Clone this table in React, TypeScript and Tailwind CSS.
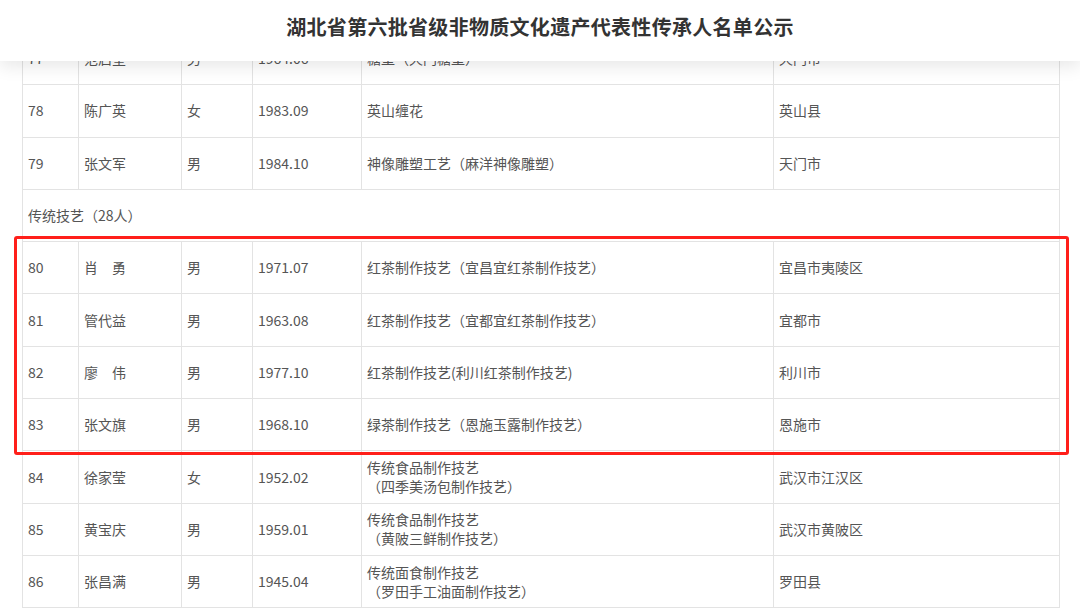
type Row = {
  no: string;
  name: string;
  sex: string;
  born: string;
  item: string[];
  place: string;
};

const before: Row[] = [
  { no: '77', name: '范启望', sex: '男', born: '1964.06', item: ['糖塑（天门糖塑）'], place: '天门市' },
  { no: '78', name: '陈广英', sex: '女', born: '1983.09', item: ['英山缠花'], place: '英山县' },
  { no: '79', name: '张文军', sex: '男', born: '1984.10', item: ['神像雕塑工艺（麻洋神像雕塑）'], place: '天门市' },
];

const after: Row[] = [
  { no: '80', name: '肖　勇', sex: '男', born: '1971.07', item: ['红茶制作技艺（宜昌宜红茶制作技艺）'], place: '宜昌市夷陵区' },
  { no: '81', name: '管代益', sex: '男', born: '1963.08', item: ['红茶制作技艺（宜都宜红茶制作技艺）'], place: '宜都市' },
  { no: '82', name: '廖　伟', sex: '男', born: '1977.10', item: ['红茶制作技艺(利川红茶制作技艺)'], place: '利川市' },
  { no: '83', name: '张文旗', sex: '男', born: '1968.10', item: ['绿茶制作技艺（恩施玉露制作技艺）'], place: '恩施市' },
  { no: '84', name: '徐家莹', sex: '女', born: '1952.02', item: ['传统食品制作技艺', '（四季美汤包制作技艺）'], place: '武汉市江汉区' },
  { no: '85', name: '黄宝庆', sex: '男', born: '1959.01', item: ['传统食品制作技艺', '（黄陂三鲜制作技艺）'], place: '武汉市黄陂区' },
  { no: '86', name: '张昌满', sex: '男', born: '1945.04', item: ['传统面食制作技艺', '（罗田手工油面制作技艺）'], place: '罗田县' },
];

const cell = 'flex flex-col justify-center pl-[5px] border-r border-[#e3e3e3]';

const TableRow = ({ r }: { r: Row }) => (
  <div className="grid h-[52.3px] grid-cols-[56px_103px_71px_109px_412px_286px] border-b border-[#e3e3e3]">
    <div className={cell}>{r.no}</div>
    <div className={cell}>{r.name}</div>
    <div className={cell}>{r.sex}</div>
    <div className={cell}>{r.born}</div>
    <div className={`${cell} leading-[19px]`}>
      {r.item.map((t) => (
        <span key={t}>{t}</span>
      ))}
    </div>
    <div className={cell}>{r.place}</div>
  </div>
);

export default function App() {
  return (
    <div
      className="relative h-[609px] w-[1080px] overflow-hidden bg-white"
      style={{ fontFamily: '"Noto Sans CJK SC", "Noto Sans", sans-serif' }}
    >
      {/* titre fixe avec ombre */}
      <header className="relative z-10 flex h-[61px] items-center justify-center bg-white shadow-[0_6px_16px_rgba(0,0,0,0.09)]">
        <h1 className="pb-[7px] text-[20px] font-bold tracking-[0.3px] text-[#333]">
          湖北省第六批省级非物质文化遗产代表性传承人名单公示
        </h1>
      </header>

      <div className="ml-[22px] -mt-[28px] w-[1038px] border-l border-[#e3e3e3] text-[14px] text-[#555]">
        {before.map((r) => (
          <TableRow key={r.no} r={r} />
        ))}
        <div className="flex h-[52.3px] items-center border-r border-b border-[#e3e3e3] pl-[5px]">
          传统技艺（28人）
        </div>
        {after.map((r) => (
          <TableRow key={r.no} r={r} />
        ))}
      </div>

      {/* cadre rouge d'annotation */}
      <div className="pointer-events-none absolute left-[14px] top-[236px] h-[219px] w-[1055px] rounded-[3px] border-[3px] border-[#ff1f1a]" />
    </div>
  );
}
